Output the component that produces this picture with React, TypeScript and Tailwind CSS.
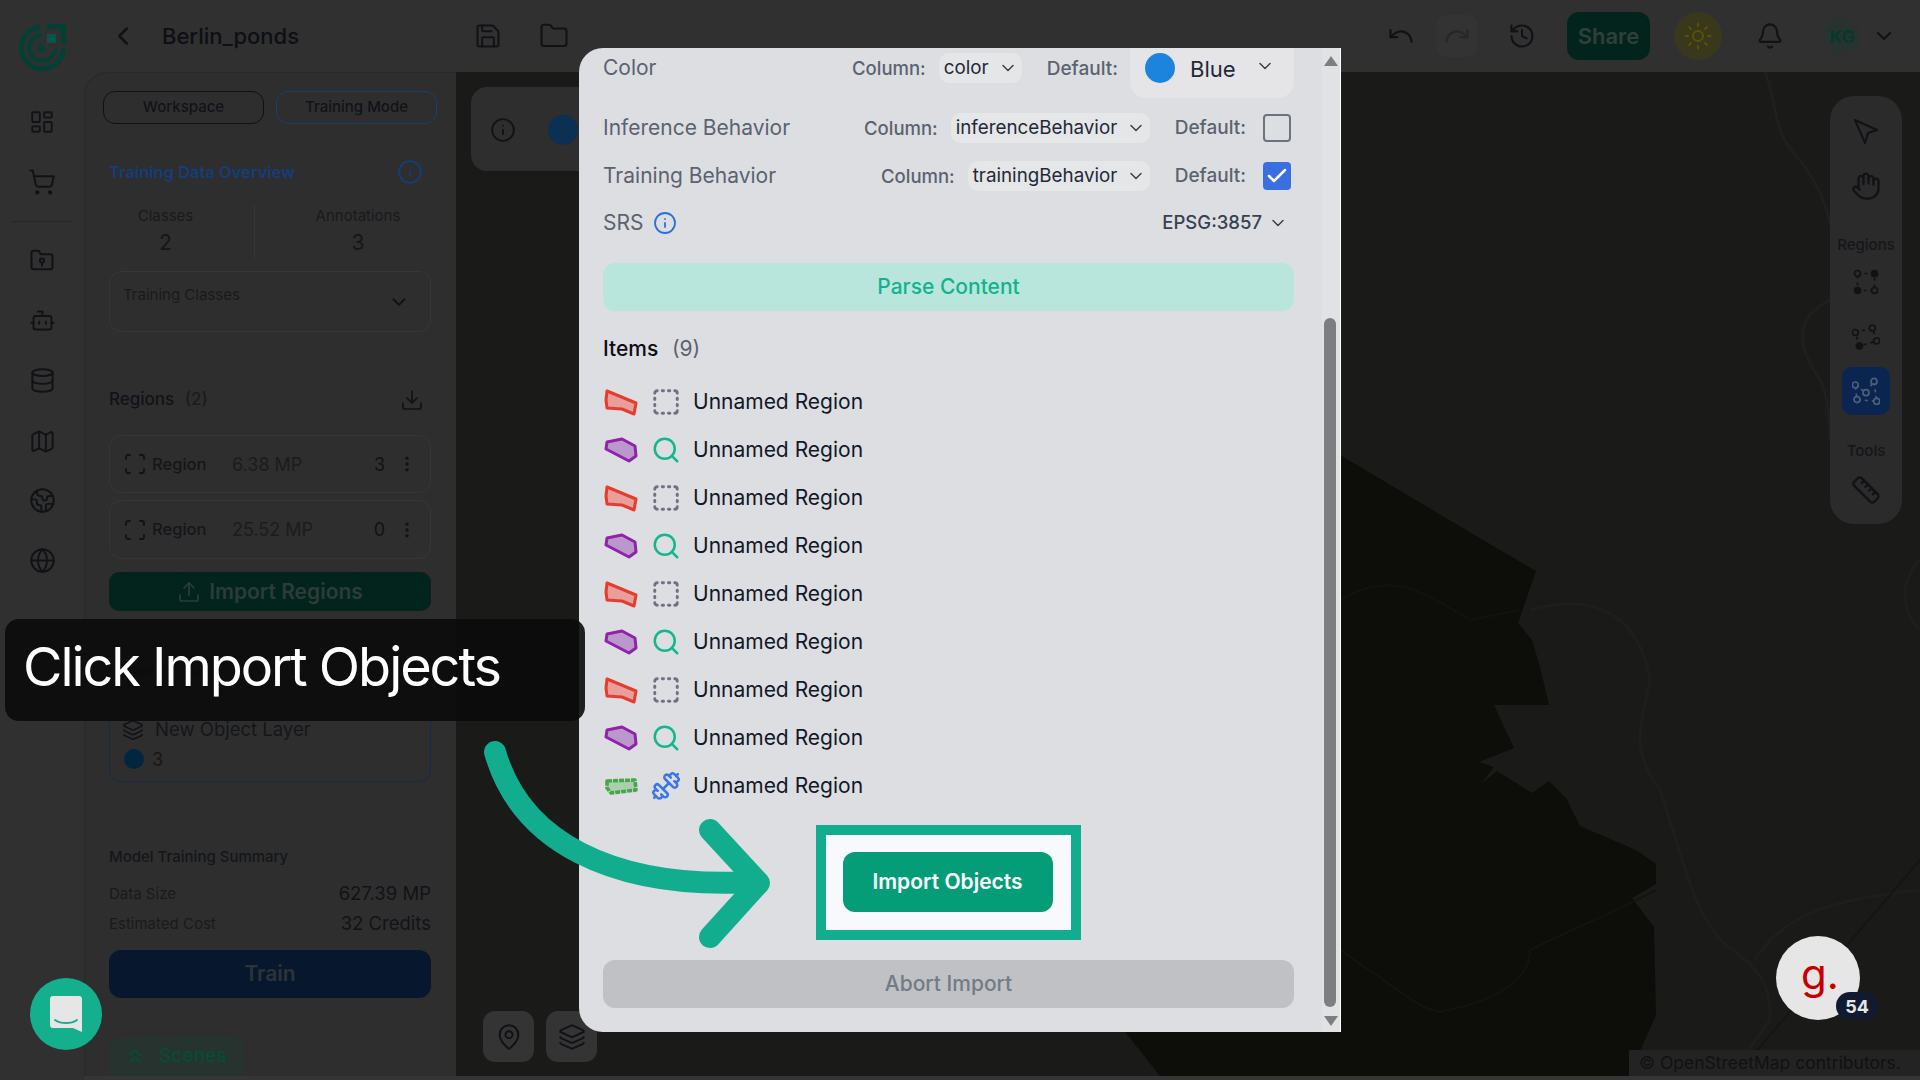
import {
  Bell,
  Bot,
  Check,
  ChevronDown,
  ChevronLeft,
  ChevronsUp,
  Database,
  Download,
  Dumbbell,
  Earth,
  EllipsisVertical,
  Folder,
  Globe,
  Hand,
  History,
  Info,
  Layers,
  LayoutDashboard,
  Map as MapIcon,
  MapPin,
  Redo,
  Ruler,
  Save,
  Scan,
  Search,
  ShoppingCart,
  SquareDashed,
  Sun,
  Undo,
  Upload,
} from 'lucide-react';

type RegionKind = 'red' | 'purple' | 'green';

const items: RegionKind[] = ['red', 'purple', 'red', 'purple', 'red', 'purple', 'red', 'purple', 'green'];

function Logo() {
  return (
    <svg width="48" height="48" viewBox="0 0 48 48" fill="none">
      <path d="M20 3.2A21 21 0 1 0 45 27" stroke="#014135" strokeWidth="5" strokeLinecap="round" />
      <path d="M22 11A13 13 0 1 0 37 26" stroke="#014135" strokeWidth="4" strokeLinecap="round" />
      <circle cx="23.5" cy="24" r="4" fill="#014135" />
      <path d="M29 0h19v20h-5V5H29z" fill="#014135" />
      <rect x="29" y="10" width="9" height="9" fill="#02574a" />
    </svg>
  );
}

function FolderPin() {
  return (
    <svg width="28" height="28" viewBox="0 0 24 24" fill="none" stroke="#101216" strokeWidth="1.7" strokeLinecap="round" strokeLinejoin="round">
      <path d="M3 6a2 2 0 0 1 2-2h4l2 3h8a2 2 0 0 1 2 2v9a2 2 0 0 1-2 2H5a2 2 0 0 1-2-2z" />
      <circle cx="12" cy="12.5" r="1.8" />
      <path d="M12 14.5V17" />
    </svg>
  );
}

function PointerIcon() {
  return (
    <svg width="26" height="28" viewBox="0 0 26 28" fill="none" stroke="#101216" strokeWidth="2" strokeLinejoin="round">
      <path d="M2 2l22 10-9 3-3 10z" />
    </svg>
  );
}

function NodesIcon({ pts, filled = [], color = '#101216', bg = '#2b2b2b' }: { pts: number[][]; filled?: number[]; color?: string; bg?: string }) {
  const outline = pts.map((p) => p.join(',')).join(' ');
  return (
    <svg width="28" height="28" viewBox="0 0 28 28" fill="none">
      <polygon points={outline} stroke={color} strokeWidth="1.7" strokeDasharray="3 4" />
      {pts.map((p, i) => (
        <circle
          key={i}
          cx={p[0]}
          cy={p[1]}
          r="3"
          stroke={color}
          strokeWidth="1.7"
          fill={filled.includes(i) ? color : bg}
        />
      ))}
    </svg>
  );
}

function RegionThumb({ kind }: { kind: RegionKind }) {
  if (kind === 'red') {
    return (
      <svg width="34" height="28" viewBox="0 0 32 28" fill="none">
        <polygon points="2,3 31,15 29,26 17,21 2,20 1,12" fill="#e6a09c" stroke="#e53c2f" strokeWidth="3" strokeLinejoin="round" />
      </svg>
    );
  }
  if (kind === 'purple') {
    return (
      <svg width="34" height="28" viewBox="0 0 32 28" fill="none">
        <polygon points="2,6 17,3 30,10 31,20 24,25 1,13" fill="#bb98cc" stroke="#8e24aa" strokeWidth="3" strokeLinejoin="round" />
      </svg>
    );
  }
  return (
    <svg width="34" height="28" viewBox="0 0 32 28" fill="none">
      <polygon points="2,9 30,8 31,18 6,21 2,16" fill="#a9cfae" stroke="#4aa54a" strokeWidth="3.6" strokeDasharray="5 1" strokeLinejoin="round" />
    </svg>
  );
}

function RegionIcon({ kind }: { kind: RegionKind }) {
  if (kind === 'red') return <SquareDashed size={30} strokeWidth={2.3} className="text-[#6b7280]" />;
  if (kind === 'purple') return <Search size={32} strokeWidth={2} className="text-[#10b890]" />;
  return <Dumbbell size={32} strokeWidth={2} className="text-[#3b76e8]" />;
}

function ColumnSelect({ value, width }: { value: string; width: string }) {
  return (
    <div className={`flex h-[30px] items-center justify-between rounded-[10px] bg-[#e5e6e7] pl-[5px] pr-[4px] text-[18.8px] text-[#1f2937] ${width}`}>
      <span>{value}</span>
      <ChevronDown size={20} strokeWidth={1.8} className="shrink-0 text-[#374151]" />
    </div>
  );
}

function BehaviorRow({ label, column, width, checked }: { label: string; column: string; width: string; checked: boolean }) {
  return (
    <div className="flex h-[30px] items-center">
      <span className="text-[21px] text-[#5b6270]">{label}</span>
      <span className="ml-auto mr-[13px] pt-[1px] text-[18.5px] font-medium text-[#5b6270]">Column:</span>
      <ColumnSelect value={column} width={width} />
      <span className="ml-[25px] mr-[17px] pt-[1px] text-[19px] font-medium text-[#5b6270]">Default:</span>
      {checked ? (
        <div className="mr-[3px] flex h-[28px] w-[28px] items-center justify-center rounded-[4px] bg-[#3b6fe0]">
          <Check size={24} strokeWidth={2.5} className="text-white" />
        </div>
      ) : (
        <div className="mr-[3px] h-[28px] w-[28px] rounded-[4px] border-[2.5px] border-[#6b7280]" />
      )}
    </div>
  );
}

function RegionCard({ size, count, h }: { size: string; count: string; h: string }) {
  return (
    <div className={`flex items-center rounded-[12px] border border-[#363636] pl-[13px] pr-[13px] ${h}`}>
      <Scan size={24} strokeWidth={1.8} className="text-[#101216]" />
      <span className="ml-[5px] w-[80px] text-[16.5px] font-medium text-[#14161a]">Region</span>
      <span className="text-[18px] text-[#1a1c1e]">{size}</span>
      <span className="ml-auto text-[18px] text-[#101216]">{count}</span>
      <EllipsisVertical size={20} className="ml-[12px] text-[#101216]" />
    </div>
  );
}

function Sidebar() {
  return (
    <aside className="flex h-full w-[372px] shrink-0 flex-col rounded-tl-[24px] border-l border-t border-[#292929] bg-[#2e2e2e] pl-[24px] pr-[25px] pt-[18px]">
      <div className="-mx-[6px] flex gap-[12px]">
        <div className="flex h-[33px] flex-1 items-center justify-center rounded-[12px] border border-[#0f1115] text-[15px] font-medium text-[#111318]">Workspace</div>
        <div className="flex h-[33px] flex-1 items-center justify-center rounded-[12px] border border-[#1a3d73] text-[15px] font-medium text-[#111318]">Training Mode</div>
      </div>
      <div className="mt-[36px] flex h-[24px] items-center justify-between pr-[8px]">
        <span className="text-[16.5px] font-semibold text-[#143d7a]">Training Data Overview</span>
        <Info size={26} strokeWidth={1.7} className="text-[#143d7a]" />
      </div>
      <div className="mt-[21px] flex h-[53px]">
        <div className="w-[146px] border-r border-[#373737] pr-[32px] text-center">
          <div className="text-[15px] leading-[22px] text-[#191a1c]">Classes</div>
          <div className="pt-[1px] text-[21px] leading-[30px] text-[#14161a]">2</div>
        </div>
        <div className="w-[176px] pl-[30px] text-center">
          <div className="text-[15px] leading-[22px] text-[#191a1c]">Annotations</div>
          <div className="pt-[1px] text-[21px] leading-[30px] text-[#14161a]">3</div>
        </div>
      </div>
      <div className="mt-[13px] flex h-[61px] justify-between rounded-[12px] border border-[#363636] pl-[13px] pr-[20px] pt-[12px]">
        <span className="text-[15px] text-[#191a1c]">Training Classes</span>
        <ChevronDown size={22} className="mt-[7px] text-[#101216]" />
      </div>
      <div className="mt-[56px] flex h-[24px] items-center justify-between pr-[7px]">
        <span className="text-[17px] font-medium text-[#111318]">
          Regions <span className="ml-[6px] text-[#1a1c1e]">(2)</span>
        </span>
        <Download size={24} strokeWidth={1.7} className="text-[#101216]" />
      </div>
      <div className="mt-[23px] flex flex-col gap-[7px]">
        <RegionCard size="6.38 MP" count="3" h="h-[58px]" />
        <RegionCard size="25.52 MP" count="0" h="h-[59px]" />
      </div>
      <div className="mt-[13px] flex h-[39px] items-center justify-center gap-[8px] rounded-[10px] bg-[#02241c] text-[21px] font-semibold text-[#2c3c38]">
        <Upload size={24} strokeWidth={1.7} />
        Import Regions
      </div>
      <div className="mt-[47px] h-[24px] text-[17px] font-medium text-[#111318]">
        Objects <span className="ml-[6px]">(1)</span>
      </div>
      <div className="mt-[23px] h-[77px] rounded-[12px] border border-[#152a4d] pl-[12px] pt-[8px]">
        <div className="flex items-center gap-[11px] pt-[2px] text-[18.5px] text-[#14161a]">
          <Layers size={22} strokeWidth={1.7} className="text-[#101216]" />
          New Object Layer
        </div>
        <div className="mt-[2px] flex items-center gap-[8px] pl-[2px] text-[18px] text-[#14161a]">
          <span className="h-[20px] w-[20px] rounded-full bg-[#02263f]" />3
        </div>
      </div>
      <div className="mt-[65px] h-[20px] text-[15px] font-medium leading-[20px] text-[#14161a]">Model Training Summary</div>
      <div className="mt-[17px] flex h-[20px] items-center justify-between">
        <span className="text-[15px] text-[#191a1c]">Data Size</span>
        <span className="text-[18.5px] text-[#111318]">627.39 MP</span>
      </div>
      <div className="mt-[10px] flex h-[20px] items-center justify-between">
        <span className="text-[15px] text-[#191a1c]">Estimated Cost</span>
        <span className="text-[18.5px] text-[#111318]">32 Credits</span>
      </div>
      <div className="mt-[16px] flex h-[48px] shrink-0 items-center justify-center rounded-[12px] bg-[#07182e] text-[21px] font-semibold text-[#2e3338]">Train</div>
      <div className="mt-[38px] flex h-[40px] w-[135px] shrink-0 items-center gap-[12px] rounded-t-[12px] bg-[#27332e] pl-[14px] text-[19px] font-semibold text-[#074a35]">
        <ChevronsUp size={24} strokeWidth={2.2} className="text-[#074a35]" />
        Scenes
      </div>
    </aside>
  );
}

function Rail() {
  return (
    <nav className="flex w-[84px] shrink-0 flex-col items-center pt-[24px] text-[#101216]">
      <Logo />
      <LayoutDashboard size={26} strokeWidth={1.7} className="mt-[37px]" />
      <ShoppingCart size={28} strokeWidth={1.7} className="mt-[33px]" />
      <div className="mt-[25px] h-px w-[60px] bg-[#272727]" />
      <div className="mt-[24px]">
        <FolderPin />
      </div>
      <Bot size={27} strokeWidth={1.7} className="mt-[33px]" />
      <Database size={27} strokeWidth={1.7} className="mt-[33px]" />
      <MapIcon size={27} strokeWidth={1.7} className="mt-[34px]" />
      <Earth size={27} strokeWidth={1.7} className="mt-[32px]" />
      <Globe size={27} strokeWidth={1.7} className="mt-[33px]" />
    </nav>
  );
}

function Header() {
  return (
    <header className="flex h-[72px] shrink-0 items-center pl-[24px] pr-[24px] text-[#101216]">
      <ChevronLeft size={30} strokeWidth={2} />
      <span className="ml-[24px] text-[22px] font-medium text-[#0d0f14]">Berlin_ponds</span>
      <Save size={28} strokeWidth={1.7} className="ml-[175px]" />
      <Folder size={30} strokeWidth={1.7} className="ml-[37px]" />
      <div className="ml-auto flex items-center">
        <Undo size={28} strokeWidth={1.8} />
        <div className="ml-[21px] flex h-[42px] w-[42px] items-center justify-center rounded-[10px] bg-[#333333]">
          <Redo size={28} strokeWidth={1.8} className="text-[#272727]" />
        </div>
        <History size={28} strokeWidth={1.8} className="ml-[30px]" />
        <div className="ml-[31px] flex h-[48px] w-[83px] items-center justify-center rounded-[12px] bg-[#02241c] text-[22px] font-semibold text-[#2f3f3a]">Share</div>
        <div className="ml-[24px] flex h-[48px] w-[48px] items-center justify-center rounded-full bg-[#39381c]">
          <Sun size={30} strokeWidth={1.6} className="text-[#5a5200]" />
        </div>
        <Bell size={28} strokeWidth={1.8} className="ml-[34px]" />
        <div className="ml-[40px] flex h-[36px] w-[36px] items-center justify-center rounded-full bg-[#283330] text-[18px] font-bold text-[#05392b]">KG</div>
        <ChevronDown size={24} className="ml-[12px]" />
      </div>
    </header>
  );
}

function ToolDock() {
  return (
    <div className="absolute right-[18px] top-[24px] flex h-[428px] w-[72px] flex-col items-center rounded-[24px] bg-[#2b2b2b] pt-[22px] text-[#101216]">
      <PointerIcon />
      <Hand size={30} strokeWidth={1.8} className="mt-[25px]" />
      <span className="mt-[33px] text-[15px] font-medium text-[#15161a]">Regions</span>
      <div className="mt-[11px]">
        <NodesIcon pts={[[5.5, 5.5], [22.5, 5.5], [22.5, 22.5], [5.5, 22.5]]} filled={[1, 3]} />
      </div>
      <div className="mt-[27px]">
        <NodesIcon pts={[[3.3, 9.5], [20.3, 5], [24.7, 18], [7.4, 23]]} filled={[3]} />
      </div>
      <div className="mt-[16px] flex h-[48px] w-[48px] items-center justify-center rounded-[10px] bg-[#0a2550]">
        <NodesIcon pts={[[3.3, 8], [14, 15.7], [22, 4.4], [24.7, 24.3], [5, 22.6]]} color="#4d5f78" bg="#0a2550" />
      </div>
      <span className="mt-[25px] text-[15px] font-medium text-[#15161a]">Tools</span>
      <Ruler size={30} strokeWidth={1.8} className="mt-[13px]" />
    </div>
  );
}

// map backdrop, faint roads + the dark scene footprint
function MapLayer() {
  return (
    <svg className="absolute inset-0" width="1464" height="1004" viewBox="456 72 1464 1004" fill="none">
      <polygon
        points="1100,400 1340,455 1483,540 1536,571 1518,623 1532,640 1540,667 1549,705 1494,705 1514,748 1479,762 1494,767 1482,783 1497,771 1532,793 1549,781 1566,798 1580,826 1636,850 1656,864 1656,884 1632,898 1654,927 1656,1015 1629,1076 1160,1076 1100,1000"
        fill="#0d0e09"
      />
      <path d="M1340 600C1390 570 1420 590 1470 620L1520 610" stroke="#13130d" strokeWidth="2" />
      <path d="M1340 950C1400 990 1420 1010 1440 1012C1500 1000 1530 980 1530 950C1570 930 1620 910 1656 890" stroke="#14140e" strokeWidth="2" />
      <path d="M1765 72C1780 110 1770 130 1800 160C1830 200 1840 240 1830 300" stroke="#1f1f1d" strokeWidth="3" />
      <path d="M1830 300C1790 320 1800 350 1820 380C1830 400 1830 430 1830 440" stroke="#1f1f1d" strokeWidth="3" />
      <path d="M1530 610C1600 590 1640 620 1650 680C1640 730 1630 750 1660 790C1690 880 1690 900 1720 940C1760 970 1770 980 1770 1020L1730 1076" stroke="#1e1e1c" strokeWidth="3" />
      <path d="M1755 960C1780 920 1820 900 1920 890" stroke="#1e1e1c" strokeWidth="3" />
      <path d="M1740 1070L1920 860" stroke="#141414" strokeWidth="1.5" />
      <path d="M1920 560C1900 580 1900 610 1920 630" stroke="#1e1e1c" strokeWidth="3" />
    </svg>
  );
}

function ScrollTriangle({ down }: { down?: boolean }) {
  return (
    <svg width="16" height="12" viewBox="0 0 16 12" className={down ? 'rotate-180' : ''}>
      <path d="M8 1l7 10H1z" fill="#7d7e80" strokeLinejoin="round" />
    </svg>
  );
}

function ImportModal() {
  return (
    <div className="absolute left-[579px] top-[48px] h-[984px] w-[762px] overflow-hidden rounded-l-[24px] border-r border-white bg-[#dddee2] pl-[24px] pr-[46px]">
      <div className="flex h-[50px] items-start">
        <span className="flex h-[40px] items-center text-[21px] text-[#5b6270]">Color</span>
        <div className="ml-auto mr-[13px] flex h-[42px] items-center text-[18.5px] font-medium text-[#5b6270]">Column:</div>
        <div className="mt-[5px]">
          <ColumnSelect value="color" width="w-[83px]" />
        </div>
        <div className="ml-[25px] mr-[12px] flex h-[42px] items-center text-[19px] font-medium text-[#5b6270]">Default:</div>
        <div className="flex h-[50px] w-[164px] items-start rounded-b-[16px] bg-[#e5e5e7] pl-[15px]">
          <div className="mt-[5px] h-[30px] w-[30px] rounded-full bg-[#1d84dd]" />
          <span className="ml-[15px] mt-[6px] text-[22px] leading-[30px] text-[#1f2937]">Blue</span>
          <ChevronDown size={20} strokeWidth={1.8} className="ml-[19px] mt-[8px] text-[#374151]" />
        </div>
      </div>
      <div className="mt-[15px]">
        <BehaviorRow label="Inference Behavior" column="inferenceBehavior" width="w-[199px]" checked={false} />
      </div>
      <div className="mt-[18px]">
        <BehaviorRow label="Training Behavior" column="trainingBehavior" width="w-[182px]" checked />
      </div>
      <div className="mt-[17px] flex h-[30px] items-center">
        <span className="text-[21px] text-[#5b6270]">SRS</span>
        <Info size={24} strokeWidth={1.8} className="ml-[10px] text-[#2a6fe0]" />
        <span className="ml-auto text-[18.5px] font-medium text-[#374151]">EPSG:3857</span>
        <ChevronDown size={20} strokeWidth={1.8} className="ml-[6px] mr-[6px] text-[#374151]" />
      </div>
      <div className="mt-[25px] flex h-[48px] items-center justify-center rounded-[12px] bg-[#b9e6dc] text-[21px] font-medium text-[#10b48c]">Parse Content</div>
      <div className="mt-[26px] h-[24px] text-[21px] font-medium leading-[24px] text-[#0b0d12]">
        Items <span className="ml-[8px] font-normal text-[#5b6270]">(9)</span>
      </div>
      <ul className="mt-[17px]">
        {items.map((kind, i) => (
          <li key={i} className="flex h-[48px] items-center">
            <span className="ml-[1px]">
              <RegionThumb kind={kind} />
            </span>
            <span className="ml-[13px] flex w-[30px] justify-center">
              <RegionIcon kind={kind} />
            </span>
            <span className="ml-[12px] text-[21px] text-[#111827]">Unnamed Region</span>
          </li>
        ))}
      </ul>
      <div className="mt-[15px] flex justify-center">
        <div className="flex h-[115px] w-[265px] items-center justify-center border-[10px] border-[#12ad8f] bg-[#f8f9fd] pb-[2px] pr-[2px]">
          <div className="flex h-[60px] w-[210px] items-center justify-center rounded-[12px] bg-[#059c78] text-[21px] font-semibold text-white">Import Objects</div>
        </div>
      </div>
      <div className="mt-[20px] flex h-[48px] items-center justify-center rounded-[12px] bg-[#bfc1c5] text-[21px] font-medium text-[#737b85]">Abort Import</div>
      {/* scrollbar */}
      <div className="absolute bottom-0 right-0 top-0 flex w-[18px] flex-col items-center justify-between bg-[#e1e2e4] pb-[5px] pt-[7px]">
        <ScrollTriangle />
        <ScrollTriangle down />
      </div>
      <div className="absolute right-[4px] top-[270px] h-[689px] w-[12px] rounded-full bg-[#7d7e80]" />
    </div>
  );
}

function CurvedArrow() {
  return (
    <svg className="absolute left-[480px] top-[730px]" width="300" height="230" viewBox="480 730 300 230" fill="none">
      <path
        d="M495 752C520 840 610 890 755 882"
        stroke="#12ad8f"
        strokeWidth="22"
        strokeLinecap="round"
      />
      <path d="M710 830L759 883L710 937" stroke="#12ad8f" strokeWidth="22" strokeLinecap="round" strokeLinejoin="round" />
    </svg>
  );
}

export default function App() {
  return (
    <div className="relative flex h-[1080px] w-[1920px] overflow-hidden bg-[#303030] [font-family:Inter,sans-serif]">
      <Rail />
      <div className="flex min-w-0 flex-1 flex-col">
        <Header />
        <div className="flex h-[1004px] shrink-0">
          <Sidebar />
          <main className="relative min-w-0 flex-1 bg-[#1a1a18]">
            <MapLayer />
            <div className="absolute left-[15px] top-[15px] flex h-[84px] w-[150px] items-start gap-[32px] rounded-[16px] bg-[#2e2e2e] pl-[19px] pt-[30px]">
              <Info size={26} strokeWidth={1.7} className="text-[#101216]" />
              <span className="-mt-[2px] h-[30px] w-[30px] rounded-full bg-[#0b3054]" />
            </div>
            <div className="absolute left-[27px] top-[939px] flex h-[51px] w-[51px] items-center justify-center rounded-[12px] bg-[#343434] text-[#101216]">
              <MapPin size={28} strokeWidth={1.7} />
            </div>
            <div className="absolute left-[90px] top-[939px] flex h-[51px] w-[51px] items-center justify-center rounded-[12px] bg-[#343434] text-[#101216]">
              <Layers size={28} strokeWidth={1.7} />
            </div>
            <ToolDock />
            <div className="absolute bottom-0 right-0 flex h-[26px] w-[291px] items-center bg-[#232323] pl-[10px] text-[17.5px] text-[#111111]">
              © OpenStreetMap contributors.
            </div>
          </main>
        </div>
        <div className="h-[4px] shrink-0 bg-[#353535]" />
      </div>

      <ImportModal />
      <CurvedArrow />

      {/* tutorial callout */}
      <div className="absolute left-[5px] top-[619px] flex h-[102px] w-[580px] items-center rounded-[14px] bg-[#0b0b0b]/90 pb-[8px] pl-[18px] text-[54px] tracking-[-0.038em] text-white">
        Click Import Objects
      </div>

      {/* chat launcher */}
      <div className="absolute left-[30px] top-[978px] flex h-[72px] w-[72px] items-center justify-center rounded-full bg-[#14b08e]">
        <svg width="32" height="36" viewBox="0 0 32 36" fill="none">
          <path d="M3 0h26a3 3 0 0 1 3 3v33l-9-4H3a3 3 0 0 1-3-3V3a3 3 0 0 1 3-3z" fill="#e6e6e6" />
          <path d="M5 24c6 4 16 4 22 0" stroke="#14b08e" strokeWidth="2" strokeLinecap="round" />
        </svg>
      </div>

      {/* review badge */}
      <div className="absolute left-[1776px] top-[936px] flex h-[84px] w-[84px] items-center justify-center rounded-full bg-[#e6e6e6] pb-[10px] pl-[4px] text-[42px] font-normal text-[#c40000]">
        g.
      </div>
      <div className="absolute left-[1836px] top-[992px] flex h-[28px] w-[42px] items-center justify-center rounded-full bg-[#111a2e] text-[18px] font-bold text-[#e6e6e6]">
        54
      </div>
    </div>
  );
}
